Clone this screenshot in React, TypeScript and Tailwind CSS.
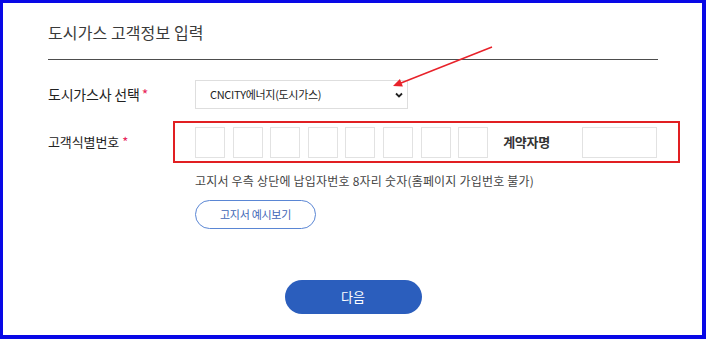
import { FC } from "react";

const CodeBox: FC = () => (
  <div className="w-[30px] h-[31px] border border-[#e2e2e2] bg-white shrink-0" />
);

const App: FC = () => {
  const boxes = [0, 1, 2, 3, 4, 5, 6, 7];
  return (
    <div className="relative w-[706px] h-[339px] bg-white border-t-[3px] border-l-[3px] border-r-4 border-b-4 border-[#0808e6] font-['Noto_Sans_CJK_KR','Noto_Sans',sans-serif]">
      <div className="pl-[45px] pr-[44px] pt-[17px]">
        <h2 className="text-[16px] leading-[24px] text-[#3a3a3a] tracking-[0.1px]">
          도시가스 고객정보 입력
        </h2>
        <div className="mt-[15px] h-px bg-[#4d4d4d]" />

        {/* 도시가스사 */}
        <div className="mt-[20px] flex items-center h-[29px]">
          <div className="w-[125px] shrink-0 text-[14px] text-[#222] tracking-[-0.2px]">
            도시가스사 선택<span className="text-[#e8275a] ml-[2px]">*</span>
          </div>
          <div className="ml-[22px] w-[213px] h-[29px] border border-[#dedede] flex items-center justify-between pl-[14px] pr-[4px]">
            <span className="text-[11px] text-[#222] tracking-[-0.3px]">CNCITY에너지(도시가스)</span>
            <svg width="8" height="6" viewBox="0 0 8 6">
              <path d="M1 1.5 L4 4.5 L7 1.5" fill="none" stroke="#222" strokeWidth="1.8" />
            </svg>
          </div>
        </div>

        {/* 고객식별번호 */}
        <div className="mt-[12px] flex items-center">
          <div className="w-[125px] shrink-0 text-[13px] text-[#222] tracking-[-0.1px]">
            고객식별번호<span className="text-[#e8275a] ml-[3px]">*</span>
          </div>
          <div className="shrink-0 w-[507px] h-[42px] border-2 border-[#e11f22] flex items-center pl-[20px] pr-[21px]">
            <div className="flex gap-[7.6px]">
              {boxes.map((b) => (
                <CodeBox key={b} />
              ))}
            </div>
            <span className="ml-[15px] text-[13px] font-bold text-[#333] tracking-[-0.3px]">계약자명</span>
            <div className="ml-auto w-[75px] h-[31px] border border-[#e2e2e2]" />
          </div>
        </div>

        <div className="ml-[147px]">
          <p className="mt-[9px] text-[12px] leading-[18px] text-[#444] tracking-[0.2px]">
            고지서 우측 상단에 납입자번호 8자리 숫자(홈페이지 가입번호 불가)
          </p>
          <button
            type="button"
            className="mt-[10px] w-[121px] h-[29px] rounded-full border border-[#5a86d4] text-[11px] text-[#3f66b6] tracking-[-0.3px] bg-white"
          >
            고지서 예시보기
          </button>
        </div>

        <div className="mt-[51px] flex justify-center">
          <button
            type="button"
            className="w-[137px] h-[34px] rounded-full bg-[#2b5ebd] text-white text-[13px]"
          >
            다음
          </button>
        </div>
      </div>

      <svg
        className="absolute top-[-3px] left-[-3px] pointer-events-none"
        width="706"
        height="339"
        viewBox="0 0 706 339"
      >
        <line x1="492" y1="47" x2="401" y2="83" stroke="#e8222a" strokeWidth="1.5" />
        <polygon points="393,86 402.9,86.4 399.9,79" fill="#e8222a" />
      </svg>
    </div>
  );
};

export default App;
